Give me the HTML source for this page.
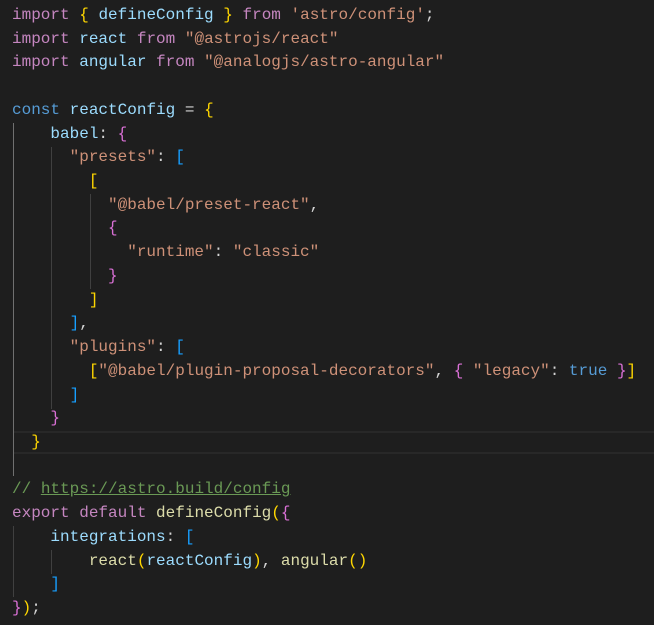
<!DOCTYPE html>
<html><head><meta charset="utf-8"><style>
html,body{margin:0;background:#1e1e1e;width:654px;height:625px;overflow:hidden}
pre{margin:0;position:absolute;left:12px;top:4px;font:16px/23.72px "Liberation Mono",monospace;color:#d4d4d4;white-space:pre}
.k{color:#c586c0}.v{color:#9cdcfe}.b{color:#569cd6}.s{color:#ce9178}.f{color:#dcdcaa}.c{color:#6a9955}
.y{color:#ffd700}.p{color:#da70d6}.u{color:#179fff}
.g{position:absolute;width:1px;background:#404040}
.cur{position:absolute;left:13px;right:0;top:431px;height:19px;border-top:2px solid #282828;border-bottom:2px solid #282828}
</style></head><body>
<div class="cur"></div>
<div class="g" style="left:13px;top:123px;height:353px;background:#707070"></div>
<div class="g" style="left:51px;top:147px;height:262px"></div>
<div class="g" style="left:90px;top:194px;height:95px"></div>
<div class="g" style="left:13px;top:526px;height:71px"></div>
<div class="g" style="left:51px;top:550px;height:24px"></div>
<pre><span class="k">import</span> <span class="y">{</span> <span class="v">defineConfig</span> <span class="y">}</span> <span class="k">from</span> <span class="s">'astro/config'</span>;
<span class="k">import</span> <span class="v">react</span> <span class="k">from</span> <span class="s">"@astrojs/react"</span>
<span class="k">import</span> <span class="v">angular</span> <span class="k">from</span> <span class="s">"@analogjs/astro-angular"</span>

<span class="b">const</span> <span class="v">reactConfig</span> = <span class="y">{</span>
    <span class="v">babel</span>: <span class="p">{</span>
      <span class="s">"presets"</span>: <span class="u">[</span>
        <span class="y">[</span>
          <span class="s">"@babel/preset-react"</span>,
          <span class="p">{</span>
            <span class="s">"runtime"</span>: <span class="s">"classic"</span>
          <span class="p">}</span>
        <span class="y">]</span>
      <span class="u">]</span>,
      <span class="s">"plugins"</span>: <span class="u">[</span>
        <span class="y">[</span><span class="s">"@babel/plugin-proposal-decorators"</span>, <span class="p">{</span> <span class="s">"legacy"</span>: <span class="b">true</span> <span class="p">}</span><span class="y">]</span>
      <span class="u">]</span>
    <span class="p">}</span>
  <span class="y">}</span>

<span class="c">// <u>https://astro.build/config</u></span>
<span class="k">export</span> <span class="k">default</span> <span class="f">defineConfig</span><span class="y">(</span><span class="p">{</span>
    <span class="v">integrations</span>: <span class="u">[</span>
        <span class="f">react</span><span class="y">(</span><span class="v">reactConfig</span><span class="y">)</span>, <span class="f">angular</span><span class="y">()</span>
    <span class="u">]</span>
<span class="p">}</span><span class="y">)</span>;</pre>
</body></html>
